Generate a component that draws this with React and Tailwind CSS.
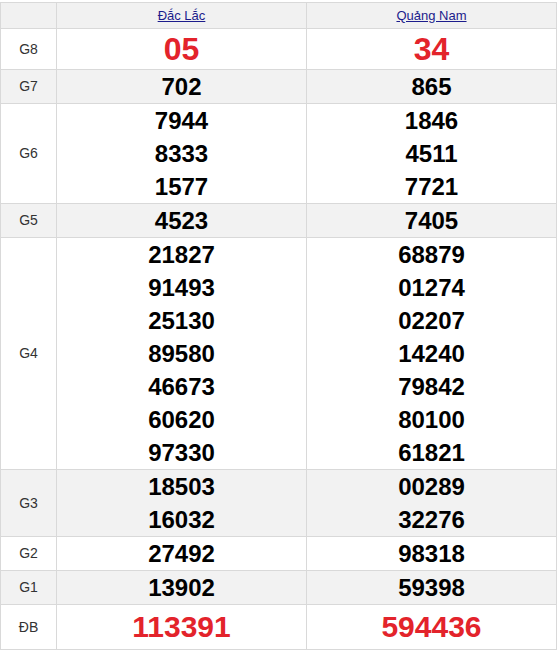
const rows = [
  { label: 'G8', a: ['05'], b: ['34'], big: true, h: 'h-[41px]', gray: false },
  { label: 'G7', a: ['702'], b: ['865'], h: 'h-[34px]', gray: true },
  { label: 'G6', a: ['7944', '8333', '1577'], b: ['1846', '4511', '7721'], h: 'h-[100px]', gray: false },
  { label: 'G5', a: ['4523'], b: ['7405'], h: 'h-[34px]', gray: true },
  {
    label: 'G4',
    a: ['21827', '91493', '25130', '89580', '46673', '60620', '97330'],
    b: ['68879', '01274', '02207', '14240', '79842', '80100', '61821'],
    h: 'h-[232px]',
    gray: false,
  },
  { label: 'G3', a: ['18503', '16032'], b: ['00289', '32276'], h: 'h-[67px]', gray: true },
  { label: 'G2', a: ['27492'], b: ['98318'], h: 'h-[33px]', gray: false },
  { label: 'G1', a: ['13902'], b: ['59398'], h: 'h-[34px]', gray: true },
  { label: 'ĐB', a: ['113391'], b: ['594436'], special: true, h: 'h-[45px]', gray: false },
]

function Cell({ nums, big, special, h }) {
  return (
    <td className={`${h} border border-[#d9d9d9] p-0 text-center align-middle`}>
      {nums.map((n) => (
        <div
          key={n}
          className={
            big
              ? 'text-[32px] font-bold leading-[38px] text-[#e3232b]'
              : special
                ? 'text-[30px] font-bold leading-[40px] text-[#e3232b]'
                : 'text-[24px] font-bold leading-[33px] text-black'
          }
        >
          {n}
        </div>
      ))}
    </td>
  )
}

export default function App() {
  return (
    <div className="bg-white pt-[2px] font-['Liberation_Sans',Arial,sans-serif]">
      <table className="w-[556px] table-fixed border-collapse">
        <colgroup>
          <col className="w-[56px]" />
          <col className="w-[250px]" />
          <col className="w-[250px]" />
        </colgroup>
        <thead>
          <tr className="h-[26px] bg-[#f1f1f1]">
            <th className="border border-[#d9d9d9] p-0"></th>
            <th className="border border-[#d9d9d9] p-0 text-[13px] font-normal">
              <a href="#" className="text-[#1c1c8c] underline">Đắc Lắc</a>
            </th>
            <th className="border border-[#d9d9d9] p-0 text-[13px] font-normal">
              <a href="#" className="text-[#1c1c8c] underline">Quảng Nam</a>
            </th>
          </tr>
        </thead>
        <tbody>
          {rows.map((r) => (
            <tr key={r.label} className={r.gray ? 'bg-[#f2f2f2]' : 'bg-white'}>
              <td className={`${r.h} border border-[#d9d9d9] p-0 text-center align-middle text-[14px] text-[#333]`}>
                {r.label}
              </td>
              <Cell nums={r.a} big={r.big} special={r.special} h={r.h} />
              <Cell nums={r.b} big={r.big} special={r.special} h={r.h} />
            </tr>
          ))}
        </tbody>
      </table>
    </div>
  )
}
